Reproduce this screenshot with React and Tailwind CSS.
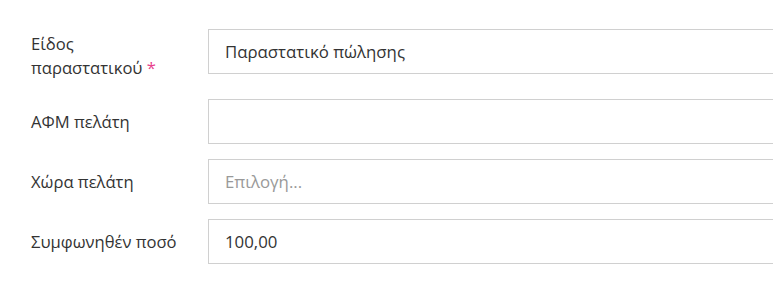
import React from 'react';

const Row = ({ label, required, children, top }) => (
  <div className={`flex ${top ? 'items-start min-h-[55px]' : 'items-center'} mb-[15px]`}>
    <label className={`w-[177px] shrink-0 pr-2 text-[16.6px] leading-[24px] text-[#333] ${top ? 'pt-[3px]' : ''}`}>
      {label}
      {required && <span className="text-[#e83e8c]"> *</span>}
    </label>
    <div className="flex-1 h-[45px] border border-[#d0d0d0] border-r-0 flex items-center px-[16px] text-[16.8px] text-[#333]">
      {children}
    </div>
  </div>
);

const App = () => {
  return (
    <div className="w-[773px] h-[282px] bg-white overflow-hidden pt-[29px] pl-[31px]" style={{ fontFamily: '"Open Sans", "Noto Sans", sans-serif' }}>
      <Row label={<>Είδος<br />παραστατικού</>} required top>
        Παραστατικό πώλησης
      </Row>
      <Row label="ΑΦΜ πελάτη" />
      <Row label="Χώρα πελάτη">
        <span className="text-[#999]">Επιλογή...</span>
      </Row>
      <Row label="Συμφωνηθέν ποσό">100,00</Row>
    </div>
  );
};

export default App;
